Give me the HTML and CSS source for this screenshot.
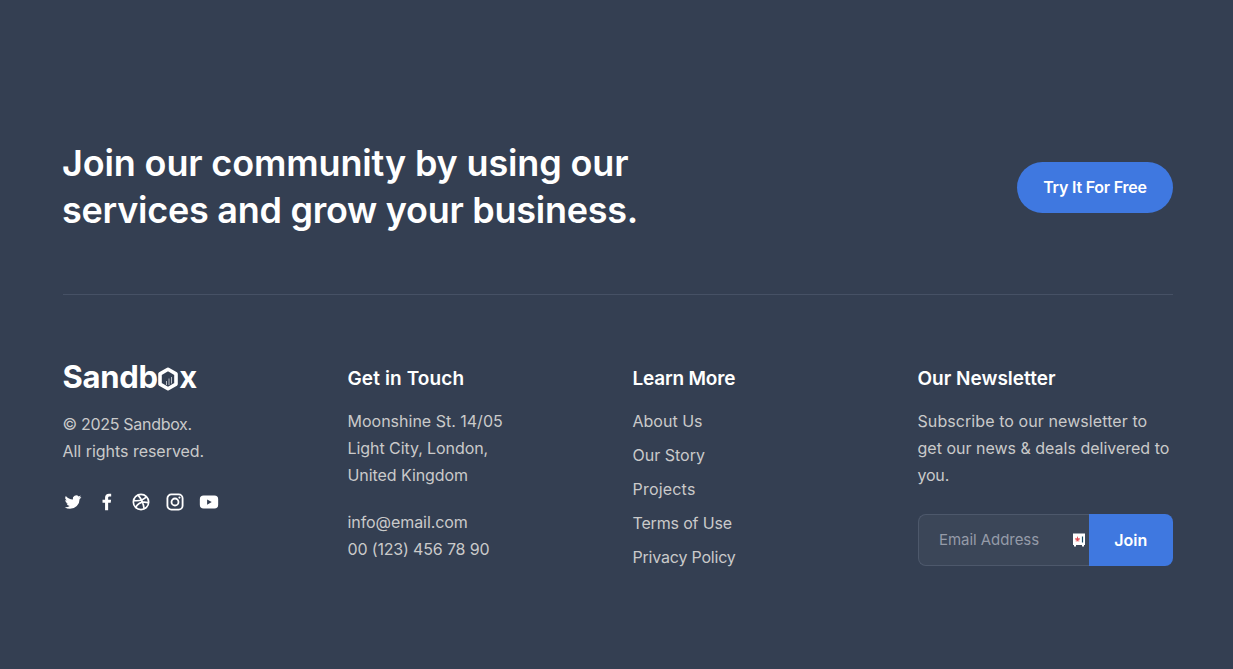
FILE: index.html
```html
<!DOCTYPE html>
<html lang="en">
<head>
<meta charset="utf-8">
<title>Sandbox</title>
<link rel="stylesheet" href="styles.css">
</head>
<body>
<footer class="footer">
  <section class="cta">
    <h2 class="cta-title"><span class="t1">Join our community by using our</span><br><span class="t2">services and grow your business.</span></h2>
    <a class="btn cta-btn">Try It For Free</a>
  </section>
  <div class="columns">
    <section class="col brand">
      <div class="logo" aria-label="Sandbox"><span>Sandb</span><svg class="hex" width="22" height="24" viewBox="0 0 22 24"><path d="M11 2.300 19 6.900v10.200L11 21.700 3 17.100V6.900Z" fill="none" stroke="#fff" stroke-width="3.600" stroke-linejoin="round"/><path d="M9.500 18v-4M12 18v-6.500M14.500 16.500V10" stroke="#fff" stroke-width="1" opacity=".65"/></svg><span>x</span></div>
      <p class="text"><span class="b1">© 2025 Sandbox.</span><br><span class="b2">All rights reserved.</span></p>
      <nav class="social">
        <svg viewBox="0 0 24 24"><path d="M22 5.900a8 8 0 0 1-2.360.650 4.100 4.100 0 0 0 1.800-2.270 8 8 0 0 1-2.600 1A4.100 4.100 0 0 0 11.850 9 11.650 11.650 0 0 1 3.390 4.710a4.100 4.100 0 0 0 1.270 5.480A4 4 0 0 1 2.800 9.680a4.100 4.100 0 0 0 3.290 4.070 4 4 0 0 1-1.850.070 4.100 4.100 0 0 0 3.830 2.850A8.230 8.230 0 0 1 2 18.370a11.610 11.610 0 0 0 6.290 1.840A11.590 11.590 0 0 0 19.960 8.500 8.400 8.400 0 0 0 22 5.900Z"/></svg>
        <svg viewBox="0 0 24 24"><path d="M15.120 5.320H17V2.140A26 26 0 0 0 14.260 2c-2.720 0-4.580 1.660-4.580 4.700v2.620H6.610v3.560h3.070V22h3.680v-9.120h3.060l.46-3.560h-3.520V7.050c0-1.050.28-1.730 1.760-1.730Z"/></svg>
        <svg viewBox="0 0 24 24"><g fill="none" stroke="#fff" stroke-width="2"><circle cx="12" cy="12" r="9.200"/><path d="M8.500 3.800C13 9 15 14 15.800 20.200M3.200 10.300C10 11 15.500 9.300 18.500 5.700M5.600 18.300C8.500 12.800 14 11 20.800 12.800"/></g></svg>
        <svg viewBox="0 0 24 24"><g fill="none" stroke="#fff" stroke-width="2.200"><rect x="2.900" y="2.900" width="18.200" height="18.200" rx="4.700"/><circle cx="12" cy="12" r="4.200"/></g><circle cx="17.340" cy="6.660" r="1.300"/></svg>
        <svg class="yt" viewBox="0 0 24 24"><path fill-rule="evenodd" d="M5.500 4.200h13A4.500 4.500 0 0 1 23 8.700v6.600a4.500 4.500 0 0 1-4.500 4.500h-13A4.500 4.500 0 0 1 1 15.300V8.700a4.500 4.500 0 0 1 4.500-4.500ZM9.740 8.850v6.300L15.270 12Z"/></svg>
      </nav>
    </section>
    <section class="col">
      <h4 class="head h1">Get in Touch</h4>
      <address class="text"><span>Moonshine St. 14/05</span><br><span class="c2">Light City, London,</span><br><span class="c2">United Kingdom</span></address>
      <p class="text contact"><span class="c4">info@email.com</span><br><span class="c5">00 (123) 456 78 90</span></p>
    </section>
    <section class="col">
      <h4 class="head h2">Learn More</h4>
      <ul class="links text"><li>About Us</li><li>Our Story</li><li class="l3">Projects</li><li class="l4">Terms of Use</li><li class="l5">Privacy Policy</li></ul>
    </section>
    <section class="col">
      <h4 class="head">Our Newsletter</h4>
      <p class="text"><span class="n1">Subscribe to our newsletter to</span><br><span>get our news &amp; deals delivered to</span><br><span class="n3">you.</span></p>
      <form class="form">
        <div class="field"><span class="ph">Email Address</span><svg width="14" height="14" viewBox="0 0 14 14"><path d="M1 .5h12V12h-1v1.500h-2V12H4v1.500H2V12H1Z" fill="#fff"/><path d="M5.500 3.700v4.600M3.300 5.400l4.400 1.400M7.700 5.400 3.300 6.800M4.200 8.500l1.300-2 1.300 2" stroke="#e04a50" stroke-width=".9" fill="none"/><path d="M10.500 3.500v6" stroke="#174a63" stroke-width="1.200"/></svg></div>
        <button class="btn join" type="button">Join</button>
      </form>
    </section>
  </div>
</footer>
</body>
</html>
```
FILE: styles.css
```css
* { box-sizing: border-box; }
body { margin: 0; background: #343f52; color: #cacaca; font-family: Inter, "Liberation Sans", sans-serif; }
h2, h4, p, ul { margin: 0; padding: 0; }
.footer { min-height: 669px; padding: 140px 60px 0 63px; }
.cta { display: flex; justify-content: space-between; align-items: center; height: 155px; padding-bottom: 60px; border-bottom: 1px solid #465165; }
.cta-title { color: #fff; font-size: 36px; line-height: 47px; font-weight: 600; white-space: nowrap; margin-left: -1px; }
.t1 { letter-spacing: -0.14px; }
.t2 { letter-spacing: -0.26px; }
.btn { background: #3f78e0; color: #fff; font-family: inherit; font-size: 16px; font-weight: 600; display: flex; align-items: center; justify-content: center; border: 0; white-space: nowrap; }
.cta-btn { width: 156px; height: 51px; border-radius: 26px; letter-spacing: -0.22px; }
.columns { display: grid; grid-template-columns: repeat(3, 285px) 255px; padding-top: 70px; }
.logo { display: flex; align-items: center; height: 22px; color: #fff; font-size: 31px; font-weight: 700; letter-spacing: -0.3px; }
.hex { flex: none; position: relative; top: 3px; margin-left: -0.5px; }
.brand .text { margin-top: 24px; }
.text { font-size: 16px; line-height: 27px; font-style: normal; white-space: nowrap; }
.b1 { letter-spacing: -0.3px; }
.b2 { letter-spacing: -0.03px; }
.c2, .c4 { letter-spacing: -0.07px; }
.c5 { letter-spacing: -0.16px; }
.l3 { letter-spacing: 0.2px; }
.l4 { letter-spacing: -0.16px; }
.l5 { letter-spacing: -0.2px; }
.n1 { letter-spacing: 0.08px; }
.n3 { letter-spacing: -0.2px; }
.head { color: #fff; font-size: 19px; line-height: 26px; font-weight: 600; padding-top: 1px; margin-bottom: 16px; white-space: nowrap; }
.h1 { letter-spacing: 0.12px; }
.h2 { letter-spacing: -0.2px; }
.col { margin-left: -0.5px; }
.contact { margin-top: 20px; }
.links { list-style: none; display: grid; gap: 7px; }
.social { display: flex; gap: 14px; margin-top: 27px; }
.social svg { width: 20px; height: 20px; fill: #fff; }
.form { display: flex; height: 52px; margin-top: 25px; }
.field { display: flex; align-items: center; justify-content: space-between; width: 171px; padding: 0 3px 0 20.5px; background: #3b4658; border: 1px solid #4d586b; border-right: 0; border-radius: 8px 0 0 8px; }
.ph { color: #959ba8; font-size: 15px; letter-spacing: -0.05px; position: relative; top: -1px; }
.join { flex: 1; border-radius: 0 8px 8px 0; padding: 0; }
```
